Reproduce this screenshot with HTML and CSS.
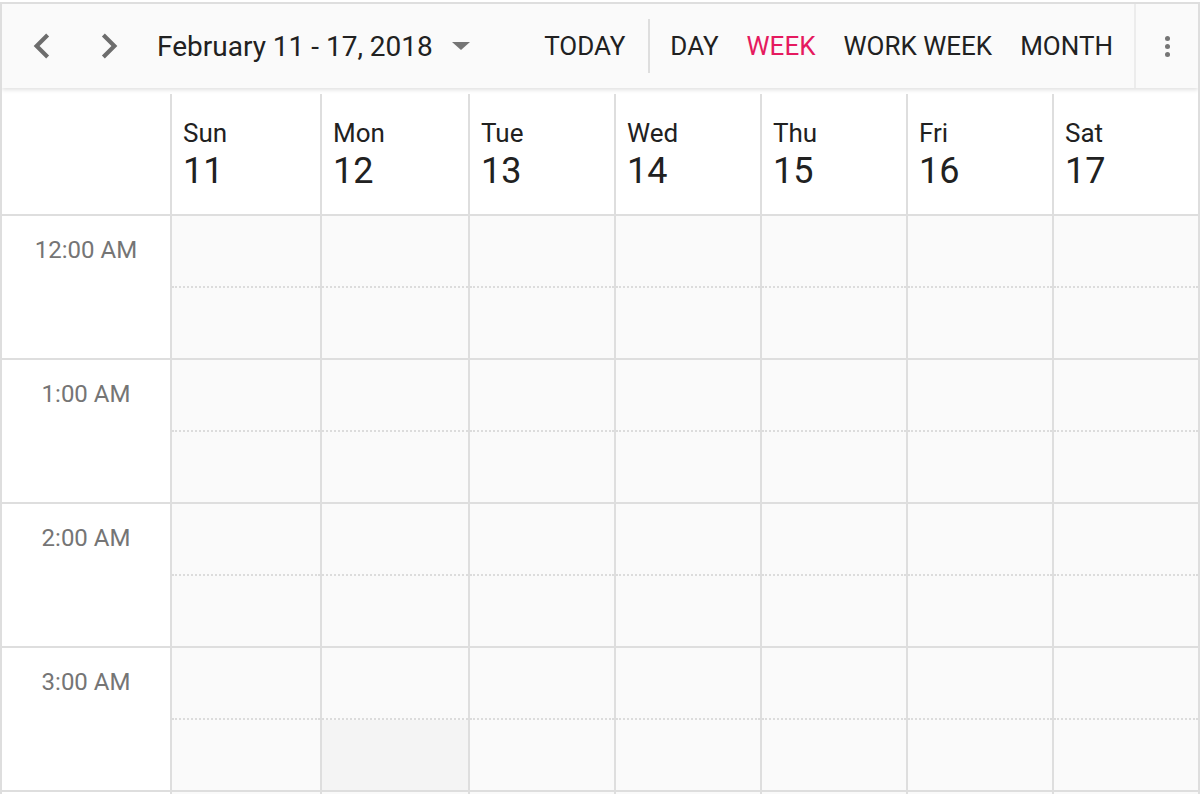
FILE: index.html
```html
<!DOCTYPE html>
<html>
<head>
<meta charset="utf-8">
<link rel="stylesheet" href="styles.css">
</head>
<body>
<div class="scheduler">
  <div class="toolbar">
    <div class="nav">
      <span class="nav-btn"><svg width="50" height="50" viewBox="0 0 24 24"><path d="M15.41 7.41L14 6l-6 6 6 6 1.41-1.41L10.83 12z" fill="#6d6d6d"/></svg></span>
      <span class="nav-btn"><svg width="50" height="50" viewBox="0 0 24 24"><path d="M10 6L8.59 7.41 13.17 12l-4.58 4.59L10 18l6-6z" fill="#6d6d6d"/></svg></span>
    </div>
    <div class="range">February 11 - 17, 2018<span class="caret"></span></div>
    <div class="spacer"></div>
    <div class="btn today">TODAY</div>
    <div class="sep"></div>
    <div class="views">
      <div class="btn">DAY</div>
      <div class="btn active">WEEK</div>
      <div class="btn">WORK WEEK</div>
      <div class="btn">MONTH</div>
    </div>
    <div class="more"><span class="dot"></span><span class="dot"></span><span class="dot"></span></div>
  </div>
  <div class="header">
    <div class="hcell corner"></div>
    <div class="hcell"><div class="dname">Sun</div><div class="dnum">11</div></div>
    <div class="hcell"><div class="dname">Mon</div><div class="dnum">12</div></div>
    <div class="hcell"><div class="dname">Tue</div><div class="dnum">13</div></div>
    <div class="hcell"><div class="dname">Wed</div><div class="dnum">14</div></div>
    <div class="hcell"><div class="dname">Thu</div><div class="dnum">15</div></div>
    <div class="hcell"><div class="dname">Fri</div><div class="dnum">16</div></div>
    <div class="hcell"><div class="dname">Sat</div><div class="dnum">17</div></div>
  </div>
  <div class="body">
    <div class="hour">
      <div class="time">12:00 AM</div>
      <div class="day"><div class="slot"></div><div class="slot"></div></div>
      <div class="day"><div class="slot"></div><div class="slot"></div></div>
      <div class="day"><div class="slot"></div><div class="slot"></div></div>
      <div class="day"><div class="slot"></div><div class="slot"></div></div>
      <div class="day"><div class="slot"></div><div class="slot"></div></div>
      <div class="day"><div class="slot"></div><div class="slot"></div></div>
      <div class="day"><div class="slot"></div><div class="slot"></div></div>
    </div>
    <div class="hour">
      <div class="time">1:00 AM</div>
      <div class="day"><div class="slot"></div><div class="slot"></div></div>
      <div class="day"><div class="slot"></div><div class="slot"></div></div>
      <div class="day"><div class="slot"></div><div class="slot"></div></div>
      <div class="day"><div class="slot"></div><div class="slot"></div></div>
      <div class="day"><div class="slot"></div><div class="slot"></div></div>
      <div class="day"><div class="slot"></div><div class="slot"></div></div>
      <div class="day"><div class="slot"></div><div class="slot"></div></div>
    </div>
    <div class="hour">
      <div class="time">2:00 AM</div>
      <div class="day"><div class="slot"></div><div class="slot"></div></div>
      <div class="day"><div class="slot"></div><div class="slot"></div></div>
      <div class="day"><div class="slot"></div><div class="slot"></div></div>
      <div class="day"><div class="slot"></div><div class="slot"></div></div>
      <div class="day"><div class="slot"></div><div class="slot"></div></div>
      <div class="day"><div class="slot"></div><div class="slot"></div></div>
      <div class="day"><div class="slot"></div><div class="slot"></div></div>
    </div>
    <div class="hour">
      <div class="time">3:00 AM</div>
      <div class="day"><div class="slot"></div><div class="slot"></div></div>
      <div class="day"><div class="slot"></div><div class="slot hover"></div></div>
      <div class="day"><div class="slot"></div><div class="slot"></div></div>
      <div class="day"><div class="slot"></div><div class="slot"></div></div>
      <div class="day"><div class="slot"></div><div class="slot"></div></div>
      <div class="day"><div class="slot"></div><div class="slot"></div></div>
      <div class="day"><div class="slot"></div><div class="slot"></div></div>
    </div>
    <div class="hour">
      <div class="time"></div>
      <div class="day"><div class="slot"></div></div>
      <div class="day"><div class="slot"></div></div>
      <div class="day"><div class="slot"></div></div>
      <div class="day"><div class="slot"></div></div>
      <div class="day"><div class="slot"></div></div>
      <div class="day"><div class="slot"></div></div>
      <div class="day"><div class="slot"></div></div>
    </div>
  </div>
</div>
</body>
</html>
```

FILE: styles.css
```css
html, body {
  margin: 0;
  padding: 0;
  background: #ffffff;
  overflow: hidden;
}
body {
  font-family: Roboto, "Liberation Sans", sans-serif;
  color: #212121;
  height: 794px;
}
.scheduler {
  margin-top: 2px;
  width: 1200px;
  height: 792px;
  box-sizing: border-box;
  border: 2px solid #dedede;
  border-bottom: none;
  overflow: hidden;
}
.toolbar {
  position: relative;
  z-index: 2;
  height: 84px;
  background: #fafafa;
  box-shadow: 0 2px 4px rgba(0, 0, 0, 0.12);
  display: flex;
  align-items: center;
}
.nav {
  display: flex;
  gap: 17px;
  margin-left: 15px;
}
.nav-btn {
  display: flex;
  width: 50px;
  height: 50px;
}
.range {
  margin-left: 23px;
  font-size: 28px;
  display: flex;
  align-items: center;
}
.caret {
  margin-left: 19px;
  width: 0;
  height: 0;
  border-left: 9px solid transparent;
  border-right: 9px solid transparent;
  border-top: 8px solid #757575;
}
.spacer {
  flex: 1;
}
.btn {
  font-size: 26px;
  text-transform: uppercase;
}
.today {
  margin-right: 23px;
}
.sep {
  width: 2px;
  height: 54px;
  background: #dedede;
}
.views {
  display: flex;
  gap: 28px;
  margin-left: 20px;
  margin-right: 21px;
}
.btn.active {
  color: #e51a5f;
}
.more {
  width: 62px;
  align-self: stretch;
  border-left: 2px solid #ececec;
  display: flex;
  flex-direction: column;
  align-items: center;
  justify-content: center;
  gap: 3px;
}
.dot {
  width: 5px;
  height: 5px;
  border-radius: 50%;
  background: #757575;
}
.header {
  display: grid;
  grid-template-columns: 168px 150px 148px 146px 146px 146px 146px 146px;
  padding-top: 6px;
  border-bottom: 2px solid #dedede;
}
.hcell {
  height: 120px;
  box-sizing: border-box;
  border-left: 2px solid #dedede;
  padding: 24px 0 0 11px;
}
.hcell.corner {
  border-left: none;
}
.dname {
  font-size: 26px;
  line-height: 30px;
}
.dnum {
  font-size: 36px;
  line-height: 40px;
  margin-top: 3px;
}
.hour {
  display: grid;
  grid-template-columns: 168px 150px 148px 146px 146px 146px 146px 146px;
  border-bottom: 2px solid #dedede;
}
.time {
  font-size: 24px;
  color: #757575;
  text-align: center;
  padding: 20px 0 0 0;
}
.day {
  border-left: 2px solid #dedede;
  background: #fafafa;
}
.slot {
  height: 70px;
}
.slot:first-child {
  border-bottom: 2px dotted #dcdcdc;
}
.slot.hover {
  background: #f4f4f4;
}
```
